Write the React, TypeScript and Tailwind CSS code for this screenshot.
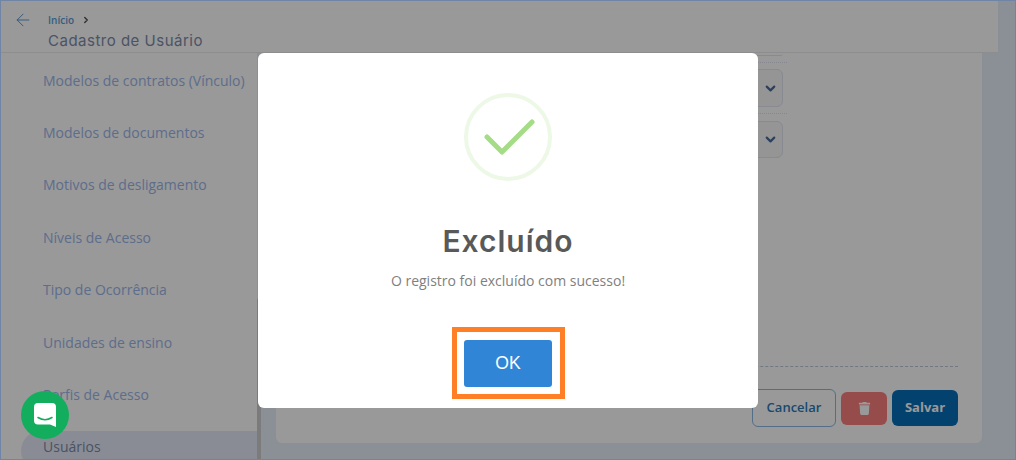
import { ArrowLeft, ChevronDown, ChevronRight } from 'lucide-react'
import { FaTrash } from 'react-icons/fa'

const menuItems = [
  'Modelos de contratos (Vínculo)',
  'Modelos de documentos',
  'Motivos de desligamento',
  'Níveis de Acesso',
  'Tipo de Ocorrência',
  'Unidades de ensino',
  'Perfis de Acesso',
]

const SelectStub = ({ className }: { className: string }) => (
  <div className={`ml-auto mr-[4px] flex w-[100px] items-center justify-end rounded-md border border-[#e2e6f2] bg-[#f8f8f8] pr-[4px] ${className}`}>
    <ChevronDown size={15} strokeWidth={3.5} className="text-[#4a6c9c]" />
  </div>
)

export default function App() {
  return (
    <div className="relative flex h-[460px] w-[1016px] flex-col overflow-hidden border border-[#7085a6] bg-[#e6f1f8] font-['Open_Sans',sans-serif]">
      <header className="flex h-[52px] w-[997px] shrink-0 border-b border-[#ececec] bg-white pl-[12px]">
        <ArrowLeft size={20} strokeWidth={1.1} className="mt-[9px] text-[#4d8fd0]" />
        <div className="ml-[15px] mt-[12px]">
          <div className="flex items-center gap-[4px] text-[10px] leading-[14px] font-semibold text-[#5a9cd0]">
            Início
            <ChevronRight size={10} strokeWidth={3.5} className="ml-[3px] text-[#555]" />
          </div>
          <div className="mt-[4px] font-['Inter',sans-serif] text-[15px] leading-[20px] font-normal tracking-[0.5px] text-[#7c8caa]">
            Cadastro de Usuário
          </div>
        </div>
      </header>

      <div className="flex min-h-0 flex-1">
        <aside className="relative w-[256px] shrink-0 bg-white">
          <nav className="flex flex-col pt-[1px]">
            {menuItems.map((item) => (
              <div key={item} className="flex h-[52.4px] items-center pl-[42px] text-[14px] text-[#9cb6ea]">
                {item}
              </div>
            ))}
            <div className="ml-[20px] mt-[10px] flex h-[40px] items-start rounded-l-[20px] bg-[#e6eaf8] pl-[22px] pt-[5px] text-[14px] text-[#7a8ba6]">
              Usuários
            </div>
          </nav>
          <div className="absolute right-[-4px] top-[246px] h-[160px] w-[4px] bg-[#cdcdcd]" />
        </aside>

        <main className="ml-[19px] flex h-[390px] w-[706px] flex-col rounded-b-md bg-white pr-[24px]">
          <div className="mr-[171px] w-[120px] self-end">
            <div className="border-b border-dotted border-[#dfe2ee] pb-[6px]">
              <div className="ml-auto mr-[4px] h-[3px] w-[100px] rounded-b-md border-b border-[#e2e6f2]" />
            </div>
            <div className="py-[6px]">
              <SelectStub className="h-[38px]" />
            </div>
            <div className="border-t border-dotted border-[#dfe2ee] pt-[7px]">
              <SelectStub className="h-[37px]" />
            </div>
          </div>

          <div className="mt-auto border-t border-dashed border-[#bcc8d4]">
            <div className="flex items-center justify-end gap-[5px] pb-[16px] pt-[22px]">
              <button className="h-[38px] w-[84px] rounded-md border border-[#8ab8e0] text-[13px] font-semibold text-[#2a7ab8]">
                Cancelar
              </button>
              <button className="flex h-[33px] w-[46px] items-center justify-center rounded-md bg-[#fa7f7d]">
                <FaTrash size={13} className="text-white" />
              </button>
              <button className="h-[36px] w-[66px] rounded-md bg-[#056eb9] text-[13px] font-bold text-white">
                Salvar
              </button>
            </div>
          </div>
        </main>
      </div>

      <div className="absolute inset-0 flex items-center justify-center bg-black/40">
        <div className="flex h-[355px] w-[500px] flex-col items-center rounded-md bg-white pt-[40px]">
          <svg width="88" height="88" viewBox="0 0 88 88" fill="none">
            <circle cx="44" cy="44" r="42" stroke="#edf8e7" strokeWidth="4" />
            <path d="M23 44 L38 59 L68 29" stroke="#a5dc86" strokeWidth="5" strokeLinecap="round" strokeLinejoin="round" />
          </svg>
          <h2 className="mt-[40px] font-['Inter',sans-serif] text-[30px] leading-[40px] font-semibold tracking-[1px] text-[#595959]">
            Excluído
          </h2>
          <p className="mt-[10px] text-[14px] leading-[20px] text-[#808080]">
            O registro foi excluído com sucesso!
          </p>
          <div className="mt-[36px] border-[5px] border-[#ff7f27] pb-[7px] pl-[7px] pr-[8px] pt-[8px]">
            <button className="h-[47px] w-[88px] rounded-[3px] bg-[#3085d6] pl-[1px] font-['Liberation_Sans',sans-serif] text-[17.6px] text-white">
              OK
            </button>
          </div>
        </div>
      </div>

      <div className="absolute bottom-[20px] left-[20px] flex h-[48px] w-[48px] items-center justify-center rounded-full bg-[#12ae5e]">
        <svg width="24" height="26" viewBox="0 0 24 26" fill="none">
          <path d="M5 1 H19 Q23 1 23 5 V25 L17 22.5 H5 Q1 22.5 1 18.5 V5 Q1 1 5 1 Z" fill="white" />
          <path d="M5 15.5 Q12 20 19 15.5" stroke="#12ae5e" strokeWidth="1.5" strokeLinecap="round" />
        </svg>
      </div>
    </div>
  )
}
